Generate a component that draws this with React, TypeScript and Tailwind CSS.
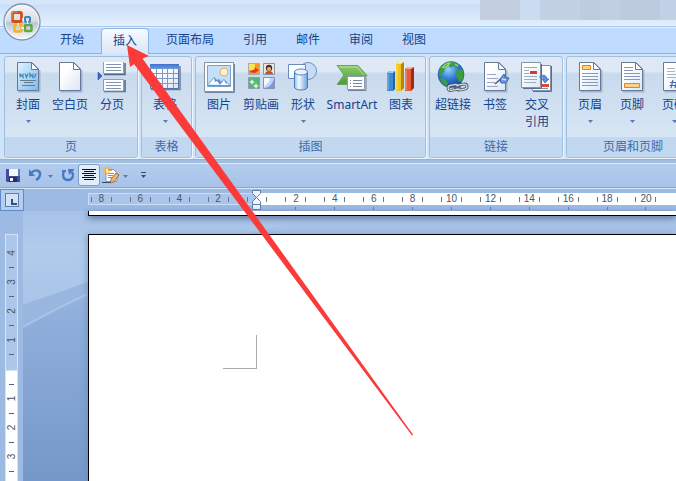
import type { ReactNode } from "react";

interface Tool {
  label: string;
  icon: ReactNode;
  arrow?: boolean;
  wide?: boolean;
}

const tabs = ["开始", "插入", "页面布局", "引用", "邮件", "审阅", "视图"];

function Defs() {
  return (
    <svg width="0" height="0" className="absolute">
      <defs>
        <linearGradient id="paper" x1="0" y1="0" x2="1" y2="1">
          <stop offset="0.3" stopColor="#fff" />
          <stop offset="1" stopColor="#dbe6f6" />
        </linearGradient>
        <linearGradient id="cover" x1="0" y1="0" x2="1" y2="1">
          <stop offset="0" stopColor="#e3f3ff" />
          <stop offset="1" stopColor="#79bdec" />
        </linearGradient>
        <linearGradient id="tube" x1="0" x2="1">
          <stop offset="0" stopColor="#9dc2ef" />
          <stop offset="0.35" stopColor="#f5faff" />
          <stop offset="1" stopColor="#6f9fdf" />
        </linearGradient>
        <linearGradient id="green" x1="0" y1="0" x2="0" y2="1">
          <stop offset="0" stopColor="#8ccb6c" />
          <stop offset="1" stopColor="#4c9a3c" />
        </linearGradient>
        <linearGradient id="header" x1="0" x2="0" y1="0" y2="1">
          <stop offset="0" stopColor="#3f73c9" />
          <stop offset="1" stopColor="#6b9ae4" />
        </linearGradient>
        <radialGradient id="globe" cx="0.4" cy="0.3" r="0.75">
          <stop offset="0" stopColor="#9cd1ff" />
          <stop offset="0.5" stopColor="#2e7bd6" />
          <stop offset="1" stopColor="#0c3f91" />
        </radialGradient>
        <linearGradient id="orb" x1="0" y1="0" x2="0" y2="1">
          <stop offset="0" stopColor="#f4f7fa" />
          <stop offset="0.48" stopColor="#d5dce6" />
          <stop offset="0.52" stopColor="#b9c5d5" />
          <stop offset="1" stopColor="#fbfdff" />
        </linearGradient>
      </defs>
    </svg>
  );
}

function Icon({ children }: { children: ReactNode }) {
  return (
    <svg width="32" height="32" viewBox="0 0 32 32" fill="none">
      {children}
    </svg>
  );
}

function Sheet({ fill = "url(#paper)" }: { fill?: string }) {
  return (
    <>
      <path d="M6.5 30.5h21V9" stroke="#8195b4" strokeOpacity="0.55" strokeWidth="2" />
      <path d="M5.5 1.5H20L26.500 8V29.500H5.500z" fill={fill} stroke="#66799b" />
      <path d="M19.500 1.500V8.500H26.500z" fill="#f8fbff" stroke="#66799b" />
    </>
  );
}

const coverIcon = (
  <Icon>
    <Sheet fill="url(#cover)" />
    <path d="M8 12.500v4M8 12.500l3 4v-4M13 12.500l1.500 4 1.500-4M18 16.500v-4l3 4v-4M24 12.500l-1.500 4" stroke="#4385b9" strokeWidth="1.200" />
    <path d="M8 19.500h16M12 21.500h9M10 24.500h13" stroke="#687b8d" />
  </Icon>
);

const blankIcon = (
  <Icon>
    <Sheet />
  </Icon>
);

const breakIcon = (
  <Icon>
    <path d="M8 13.500h21V2M8 30.500h21V19" stroke="#526783" strokeWidth="1.500" />
    <path d="M7.500 1V12.500H27.500V1M7.500 30V18.500H27.500V30z" fill="#fff" stroke="#8c9db7" />
    <path d="M10 3.500h15M10 6.500h15M10 9.500h15M10 21.500h15M10 24.500h15M10 27.500h15" stroke="#8193b3" />
    <path d="M2 11l4 4-4 4z" fill="#3b65c5" stroke="#2447a0" strokeWidth="0.500" />
  </Icon>
);

const tableIcon = (
  <Icon>
    <path d="M2 28.500h29V5" stroke="#6b7d9c" strokeWidth="1.500" />
    <path d="M1.500 3.500h28v24h-28z" fill="url(#paper)" stroke="#5272aa" />
    <path d="M1 3h29v5H1z" fill="url(#header)" />
    <path d="M7.500 8v19M13.500 8v19M18.500 8v19M24.500 8v19M2 12.500h27M2 17.500h27M2 22.500h27" stroke="#8398ba" />
  </Icon>
);

const pictureIcon = (
  <Icon>
    <path d="M2 31.500h29.500V3" stroke="#71849e" />
    <path d="M1.500 1.500h29v29h-29z" fill="#fbfdff" stroke="#8293a8" />
    <path d="M4.500 4.500h23v21h-23z" fill="#c3e0fa" stroke="#76a0cf" />
    <circle cx="21" cy="11" r="4" fill="#fff3d5" stroke="#eda65e" />
    <path d="M5 23l6-7 3 3 2-1 4 5z" fill="#688fca" />
    <path d="M14 24l7-6 6 6z" fill="#6e9ad6" />
    <path d="M6 23l5-6 1 4 2-1 3 4zM17 24l4-5 2 4 1-1 2 2z" fill="#fff" />
    <path d="M5 24h22v1H5z" fill="#6c91bd" />
  </Icon>
);

const clipIcon = (
  <Icon>
    <path d="M3.500 2.500h11v11h-11z" fill="#f79a25" stroke="#a6adb9" />
    <path d="M4 3h6v6H4z" fill="#ffe34d" />
    <path d="M4 11l6-3-1-2 5 3-4 3z" fill="#d93d21" />
    <path d="M18.500 2.500h11v11h-11z" fill="#eee8e1" stroke="#8795aa" />
    <circle cx="24" cy="7" r="3.200" fill="#4c312b" />
    <circle cx="24" cy="8" r="2" fill="#f6b36c" />
    <path d="M20 13c0-2 2-3 4-3s4 1 4 3z" fill="#d44a26" />
    <path d="M3.500 16.500h11v11h-11z" fill="#57b37b" stroke="#8a9db3" />
    <path d="M7 18l1 2 2 1-2 1-1 2-1-2-2-1 2-1zM11 22l1 2 2 1-2 1-1 2-1-2-2-1 2-1z" fill="#d7ffc3" />
    <path d="M18.500 16.500h11v11h-11z" fill="#bed3fb" stroke="#8793b5" />
    <path d="M19 17h6l-1 4-5 5z" fill="#f2f7ff" />
    <path d="M29 18v9h-9c5-1 7-4 9-9z" fill="#7897e6" />
  </Icon>
);

const shapesIcon = (
  <Icon>
    <circle cx="21" cy="10" r="8.500" fill="#c8dcf7" stroke="#6c8fc6" />
    <path d="M1.500 3.500h17v14h-17z" fill="url(#paper)" stroke="#688cc1" />
    <path d="M7.500 11v15c0 4 13 4 13 0V11z" fill="url(#tube)" stroke="#4779bf" />
    <ellipse cx="14" cy="11" rx="6.500" ry="3" fill="#e9f3ff" stroke="#5986c8" />
  </Icon>
);

const smartIcon = (
  <Icon>
    <path d="M1 4.500h21l9 10-8 9H1l7-9.500z" fill="url(#green)" stroke="#6ba756" />
    <path d="M3 6h18l7 8" stroke="#b4e196" />
    <path d="M12 29.500h18V17" stroke="#717e95" />
    <path d="M11.500 15.500h17v13h-17z" fill="#fff" stroke="#8b9bb2" />
    <path d="M14 19.500h1M17 19.500h9M14 22.500h1M17 22.500h9M14 25.500h1M17 25.500h9" stroke="#7987a0" />
  </Icon>
);

const chartIcon = (
  <Icon>
    <path d="M2 12l3-2h5v18l-2 2H2z" fill="#2263ae" />
    <path d="M2 12h6v18H2z" fill="#3e8bd2" />
    <path d="M2 12l3-2h5l-2 2z" fill="#91cdfa" />
    <path d="M11 3l3-2h5v26l-3 3h-5z" fill="#b58506" />
    <path d="M11 3h5v27h-5z" fill="#f1c51d" />
    <path d="M11 3l3-2h5l-3 2z" fill="#ffed8d" />
    <path d="M20 8l3-2h6v21l-3 3h-6z" fill="#a42b13" />
    <path d="M20 8h6v22h-6z" fill="#e75b35" />
    <path d="M20 8l3-2h6l-3 2z" fill="#ffb190" />
    <path d="M3 13v16M12 4v25M21 9v20" stroke="#fff" strokeOpacity="0.45" />
  </Icon>
);

const linkIcon = (
  <Icon>
    <circle cx="14" cy="13.500" r="13" fill="url(#globe)" stroke="#286091" strokeWidth="0.600" />
    <path d="M2 9c2-5 6-8 12-8l-3 4-3 2-1 4-4 4zM13 1c4 0 6 0 9 3l-3 2-3-1-2 2-2-2zM3 17l5 1 3 4-1 3c-4-1-7-5-7-8zM20 9l5-1c2 3 2 8 0 12l-3 1-2-4-2-4z" fill="#3d9c42" />
    <path d="M5 7c2-3 5-5 8-5l-3 3-4 2M18 3l3 2" stroke="#a4db69" strokeWidth="1.200" />
    <rect x="11" y="24" width="10" height="5" rx="2.500" stroke="#4e5967" strokeWidth="3" transform="rotate(-10 16 26)" />
    <rect x="20" y="23.500" width="10" height="5" rx="2.500" stroke="#4e5967" strokeWidth="3" transform="rotate(-10 25 26)" />
    <rect x="11" y="24" width="10" height="5" rx="2.500" stroke="#d5dde5" strokeWidth="1.300" transform="rotate(-10 16 26)" />
    <rect x="20" y="23.500" width="10" height="5" rx="2.500" stroke="#d5dde5" strokeWidth="1.300" transform="rotate(-10 25 26)" />
    <path d="M17 27l7-1.500" stroke="#59636f" strokeWidth="2" />
  </Icon>
);

const bookmarkIcon = (
  <Icon>
    <Sheet />
    <path d="M8 13.500h9M8 17.500h11M8 21.500h8M8 25.500h11" stroke="#9aa9c1" />
    <path d="M16 23l8-7" stroke="#42587a" strokeWidth="1.500" />
    <path d="M21 18l4-5 1 3 4 1-3 5h-5z" fill="#6c9ae0" stroke="#3763a7" />
    <path d="M23 18l4 1" stroke="#e4f1ff" />
  </Icon>
);

const crossIcon = (
  <Icon>
    <path d="M12 30.500h18.500V5" stroke="#58708f" />
    <path d="M11.500 4.500h18v25h-18z" fill="#fff" stroke="#8094af" />
    <path d="M20 23h8v3h-8z" fill="#d6502d" />
    <path d="M14 27.500h13" stroke="#899bb4" />
    <path d="M2 27.500h18.500V3" stroke="#58708f" />
    <path d="M.5 1.500h19v25H.5z" fill="url(#paper)" stroke="#8094af" />
    <path d="M3 6.500h13M3 9.500h5M3 12.500h5M3 15.500h13M3 18.500h13M3 21.500h12" stroke="#9aabc4" />
    <path d="M9 10h7v3H9z" fill="#d93b20" />
    <path d="M19 15c4-2 7 0 7 3h2l-4 4-3-4h2c0-2-2-2-4-1z" fill="#5e8fdb" stroke="#2f62b1" strokeWidth="0.700" />
  </Icon>
);

const headerIcon = (
  <Icon>
    <Sheet />
    <path d="M8.500 4.500h8v4h-8z" fill="#ffd28a" stroke="#e78118" />
    <path d="M8 12.500h16M8 15.500h16M8 18.500h16M8 21.500h16M8 24.500h16" stroke="#859ab9" />
  </Icon>
);

const footerIcon = (
  <Icon>
    <Sheet />
    <path d="M8 6.500h9M8 9.500h9M8 12.500h16M8 15.500h16M8 18.500h16" stroke="#859ab9" />
    <path d="M8.500 22.500h15v4h-15z" fill="#ffd28a" stroke="#e78118" />
  </Icon>
);

const numberIcon = (
  <Icon>
    <Sheet />
    <path d="M9 7.500h8M9 10.500h8M9 13.500h14M9 16.500h14" stroke="#a6b4ca" />
    <path d="M15 19l-2 8M19 19l-2 8M12 21.500h9M11.500 24.500h9" stroke="#466dac" strokeWidth="1.200" />
  </Icon>
);

const groups: { name: string; width: string; tools: Tool[] }[] = [
  {
    name: "页",
    width: "w-[134px]",
    tools: [
      { label: "封面", icon: coverIcon, arrow: true },
      { label: "空白页", icon: blankIcon },
      { label: "分页", icon: breakIcon },
    ],
  },
  {
    name: "表格",
    width: "w-[51px]",
    tools: [{ label: "表格", icon: tableIcon, arrow: true }],
  },
  {
    name: "插图",
    width: "w-[231px]",
    tools: [
      { label: "图片", icon: pictureIcon },
      { label: "剪贴画", icon: clipIcon },
      { label: "形状", icon: shapesIcon, arrow: true },
      { label: "SmartArt", icon: smartIcon, wide: true },
      { label: "图表", icon: chartIcon },
    ],
  },
  {
    name: "链接",
    width: "w-[134px]",
    tools: [
      { label: "超链接", icon: linkIcon },
      { label: "书签", icon: bookmarkIcon },
      { label: "交叉引用", icon: crossIcon },
    ],
  },
  {
    name: "页眉和页脚",
    width: "w-[134px]",
    tools: [
      { label: "页眉", icon: headerIcon, arrow: true },
      { label: "页脚", icon: footerIcon, arrow: true },
      { label: "页码", icon: numberIcon, arrow: true },
    ],
  },
];

function Caret({ bar = false }: { bar?: boolean }) {
  return (
    <svg width="7" height="7" viewBox="0 0 7 7" className="shrink-0">
      {bar && <path d="M1 0h5v1H1z" fill="#2c4f86" />}
      <path d="M1 3h5L3.500 6z" fill={bar ? "#2c4f86" : "#567db1"} />
    </svg>
  );
}

function ToolButton({ tool }: { tool: Tool }) {
  return (
    <button
      className={`flex h-20 shrink-0 flex-col items-center pt-1 text-[#15428b] ${tool.wide ? "w-14" : "w-[42px]"}`}
    >
      {tool.icon}
      <span
        className={`mt-[3px] text-xs leading-[17px] ${tool.label.length === 4 ? "w-6 whitespace-normal" : "whitespace-nowrap"}`}
      >
        {tool.label}
      </span>
      {tool.arrow && (
        <span className="mt-1">
          <Caret />
        </span>
      )}
    </button>
  );
}

function OfficeButton() {
  return (
    <svg width="38" height="38" viewBox="0 0 38 38" className="absolute left-[3px] top-[3px]" fill="none">
      <circle cx="19" cy="19" r="18" fill="url(#orb)" stroke="#8193ae" strokeWidth="1.300" />
      <circle cx="19" cy="19" r="16.700" stroke="#fff" strokeOpacity="0.800" />
      <rect x="9.500" y="9.500" width="9" height="9" rx="1.500" stroke="#d84b16" strokeWidth="2.800" />
      <path d="M9 17V9h6" stroke="#f28b38" strokeWidth="1.200" />
      <rect x="22" y="14" width="5" height="5" rx="1" stroke="#3c86c8" strokeWidth="2" />
      <rect x="11.500" y="22" width="7" height="6.500" rx="1" stroke="#f3b329" strokeWidth="2.500" />
      <rect x="22" y="22" width="6.500" height="6" rx="1" stroke="#62a83c" strokeWidth="2.500" />
      <path d="M20 15v3M24.500 18v3M15 20v3M18 25h3" stroke="#f7faff" strokeWidth="1.300" />
    </svg>
  );
}

function TitleBar() {
  return (
    <header className="flex h-[26px] justify-end bg-linear-to-b from-[#d7e7fb] from-15% via-[#cbdff7] via-20% to-[#e2f0fe]">
      {/* blurred window caption */}
      <div className="flex h-5 w-[196px]">
        <div className="w-10 bg-[#c3cfdf]" />
        <div className="w-5 bg-[#cbdcf3]" />
        <div className="w-10 bg-[#c3d1e5]" />
        <div className="w-5 bg-[#bfccdd]" />
        <div className="w-5 bg-[#c0cfe1]" />
        <div className="w-10 bg-[#bccbde]" />
        <div className="grow bg-[#c2d1e6]" />
      </div>
    </header>
  );
}

function TabBar() {
  return (
    <nav className="flex h-[28px] items-start border-t border-b border-t-[#a8c8ea] border-b-[#8db2e3] bg-[#bfdbff] pl-[48px] text-xs text-[#15428b] shadow-[inset_0_1px_#e3f1ff]">
      {tabs.map((tab) => (
        <a
          key={tab}
          className={
            tab === "插入"
              ? "mx-[2.500px] mt-px flex h-[26px] items-center rounded-t border border-b-0 border-[#8fb4e0] bg-linear-to-b from-[#f5faff] to-[#dbe7f5] px-[11px] pb-0.5"
              : "flex h-[26px] items-center px-[14.500px] first:pl-3"
          }
        >
          {tab}
        </a>
      ))}
    </nav>
  );
}

function Ribbon() {
  return (
    <section className="flex h-[106px] gap-[3px] overflow-hidden border-b border-[#8eb4df] bg-[#cfe3fa] pt-[2px] pl-1">
      {groups.map((group) => (
        <div
          key={group.name}
          className={`flex h-[102px] shrink-0 flex-col overflow-hidden rounded-[3px] border border-[#9fbfdd] bg-linear-to-b from-[#dfe9f5] from-14% via-[#c9daed] via-17% to-[#dce9f7] shadow-[1px_1px_0_#edf6ff] ${group.width}`}
        >
          <div className="flex h-20 shrink-0 pl-[2px]">
            {group.tools.map((tool) => (
              <ToolButton key={tool.label} tool={tool} />
            ))}
          </div>
          <div className="flex h-5 items-center justify-center bg-[#c1d8f0] text-xs text-[#3e6aaa]">
            {group.name}
          </div>
        </div>
      ))}
    </section>
  );
}

function QuickAccess() {
  return (
    <div className="flex h-[28px] items-center border-t-[3px] border-b border-t-[#a3bfdf] border-b-[#83a9d6] bg-linear-to-b from-[#b4cdee] to-[#a7c3e8] pl-1.5 shadow-[inset_0_1px_#dceaff]">
      <svg width="14" height="14" viewBox="0 0 14 14">
        <path d="M0 1h13l1 1v12H1l-1-1z" fill="#414d9d" />
        <path d="M3 1h9v7H3z" fill="#f1f6ff" />
        <path d="M12 1h2v7h-2z" fill="#687bce" />
        <path d="M3 9h8v5H3z" fill="#252e64" />
        <path d="M4 10h3v3H4z" fill="#fff" />
      </svg>
      <svg width="15" height="16" viewBox="0 0 15 16" className="ml-2" fill="none">
        <path d="M3 6c5-5 10-2 9 2-.5 3-2 4-4 5" stroke="#4479c6" strokeWidth="2.300" />
        <path d="M1 2v7h6z" fill="#4479c6" />
      </svg>
      <span className="ml-1"><Caret /></span>
      <svg width="14" height="16" viewBox="0 0 14 16" className="ml-[7px]" fill="none">
        <path d="M3 4c-2 4-1 9 4 9 5 0 6-5 4-8" stroke="#4479c6" strokeWidth="2.300" />
        <path d="M7 2h6v1L8 8z" fill="#4479c6" />
        <path d="M1 3h4v2H1z" fill="#4479c6" />
      </svg>
      <span className="ml-[3px] flex h-[22px] w-[22px] items-center justify-center rounded-[3px] border border-[#7f9cc7] bg-[#e2edfb]">
        <svg width="16" height="14" viewBox="0 0 16 14" stroke="#111">
          <path d="M1 1.500h14M3 3.500h10M1 5.500h14M3 7.500h10M1 9.500h14M3 11.500h10" />
        </svg>
      </span>
      <svg width="18" height="18" viewBox="0 0 18 18" className="ml-0.5" fill="none">
        <path d="M4 3.500h8l3 4v8H4z" fill="#fff" stroke="#8b98ac" />
        <path d="M6 7.500h6M6 9.500h5M6 11.500h6" stroke="#8494ad" />
        <path d="M5 0v9M1 4.500h9M2 1.500l6 6M8 1.500l-6 6" stroke="#f5ae20" />
        <path d="M4 3h2v3H4z" fill="#fff593" />
        <path d="M9 13l5-6 3 2-5 7-4 1z" fill="#efb16b" stroke="#80552e" strokeWidth="0.700" />
        <path d="M0 16.500h8" stroke="#31486e" />
      </svg>
      <span className="ml-0.5"><Caret /></span>
      <span className="ml-[11px]"><Caret bar /></span>
    </div>
  );
}

function RulerCell({ value }: { value: number }) {
  return (
    <div className="flex w-[38.900px] shrink-0 items-center justify-center gap-1">
      <i className="h-[5px] w-px bg-[#6b7685]" />
      <span className="w-[11px] text-center">{value}</span>
      <i className="h-[5px] w-px bg-[#6b7685]" />
    </div>
  );
}

function HorizontalRuler() {
  return (
    <div className="relative flex h-[23px] border-t border-[#d5e5fa] bg-[#9dbae3]">
      <div className="flex h-[22px] w-6 items-center justify-center border border-[#5f88c9] bg-[#b5ceef]">
        <div className="flex h-[14px] w-[14px] items-center justify-center border border-[#5c7eae] bg-[#d2e1f5]">
          <i className="mt-1 ml-1 h-[6px] w-[6px] border-b-2 border-l-2 border-[#35527f]" />
        </div>
      </div>
      <div className="ml-16 flex flex-col pt-1 font-['Liberation_Sans',sans-serif] text-[10px] leading-none text-[#4b5563]">
        <div className="flex h-3 w-[588px]">
          <div className="flex w-[169px] shrink-0 justify-end overflow-hidden border-y border-l border-[#cadefa] bg-[#aac5e9]">
            {[8, 6, 4, 2].map((n) => (
              <RulerCell key={n} value={n} />
            ))}
            <div className="flex w-[19.500px] shrink-0 items-center justify-center">
              <i className="h-[5px] w-px bg-[#6b7685]" />
            </div>
          </div>
          <div className="flex grow overflow-hidden bg-white">
            <div className="flex w-[19.500px] shrink-0 items-center justify-center">
              <i className="h-[5px] w-px bg-[#6b7685]" />
            </div>
            {[2, 4, 6, 8, 10, 12, 14, 16, 18, 20].map((n) => (
              <RulerCell key={n} value={n} />
            ))}
          </div>
        </div>
        <div className="flex w-[588px] overflow-hidden pt-0.5 pl-[188.500px]">
          {[2, 4, 6, 8, 10, 12, 14, 16, 18, 20].map((n) => (
            <div key={n} className="flex w-[38.900px] shrink-0 justify-center">
              <i className="h-[3px] w-px bg-[#6884a9]" />
            </div>
          ))}
        </div>
      </div>
      <svg width="11" height="21" viewBox="0 0 11 21" className="absolute left-[251px] top-[1px]" fill="#edf4fd" stroke="#5d7fa9">
        <path d="M1.500.5h8v3L5.500 7.500l4 4v3h-8v-3l4-4-4-4zM1.500 14.500h8v5h-8z" />
      </svg>
    </div>
  );
}

function VerticalRuler() {
  return (
    <aside className="flex w-[23px] shrink-0 flex-col bg-[#9dbae3] pt-[23px] pl-[5px] font-['Liberation_Sans',sans-serif] text-[10px] leading-none text-[#4b5563]">
      <div className="flex h-[137px] w-[13px] shrink-0 flex-col items-center border border-[#d2e4fb] bg-[#acc7ea] pt-1">
        {[4, 3, 2, 1].map((n) => (
          <div key={n} className="flex h-[29.100px] w-full flex-col items-center">
            <span className="flex h-[29px] items-center -rotate-90">{n}</span>
            <i className="h-px w-[5px] shrink-0 bg-[#53657f]" />
          </div>
        ))}
      </div>
      <div className="flex h-[111px] w-[13px] shrink-0 flex-col items-center border-x border-[#d2e4fb] bg-white pt-[13px]">
        {[1, 2, 3].map((n) => (
          <div key={n} className="flex h-[29.100px] w-full shrink-0 flex-col items-center">
            <i className="h-px w-[5px] shrink-0 bg-[#53657f]" />
            <span className="flex h-[27px] items-center -rotate-90">{n}</span>
          </div>
        ))}
        <i className="h-px w-[5px] shrink-0 bg-[#53657f]" />
      </div>
    </aside>
  );
}

function Workspace() {
  return (
    <main className="flex h-[270px]">
      <VerticalRuler />
      <div className="relative flex grow flex-col bg-linear-to-b from-[#aac6e9] via-[#8faedb] via-40% to-[#7598ca]">
        {/* backdrop swoosh */}
        <svg width="653" height="270" viewBox="0 0 653 270" className="absolute top-0 left-0">
          <defs>
            <linearGradient id="sky" x1="0" y1="0" x2="0" y2="1">
              <stop offset="0" stopColor="#a6c2e7" />
              <stop offset="0.400" stopColor="#b1cbec" />
              <stop offset="1" stopColor="#a8c4e8" />
            </linearGradient>
          </defs>
          <path d="M0 0h300C220 30 150 35 65 71C40 80 20 88 0 94z" fill="url(#sky)" />
          <path d="M0 94C20 87 40 80 65 71V83C40 94 20 106 0 116z" fill="#98b6de" />
          <path d="M0 116C20 105 40 94 65 83" fill="none" stroke="#a7c3e8" strokeWidth="2" />
        </svg>
        <div className="relative ml-[65px] h-[5px] shrink-0 border-b border-l border-black bg-white shadow-[0_2px_6px_#4d658a]" />
        <div className="relative mt-[18px] ml-[65px] grow border-t border-l border-black bg-white pt-[100px] pl-[134px] shadow-[-2px_0_5px_#6685b380]">
          <div className="h-[34px] w-[34px] border-r border-b border-[#aaa]" />
        </div>
      </div>
    </main>
  );
}

export default function App() {
  return (
    <div className="relative h-[481px] w-[676px] overflow-hidden bg-[#9dbae3] font-['Noto_Sans','Noto_Sans_CJK_SC',sans-serif]">
      <Defs />
      <TitleBar />
      <TabBar />
      <Ribbon />
      <QuickAccess />
      <HorizontalRuler />
      <Workspace />
      <OfficeButton />
      <svg width="676" height="481" viewBox="0 0 676 481" className="pointer-events-none absolute inset-0">
        <path d="M127 45L149 56L142.500 58.500L413 434.500L412 435.500L134 64L130 67z" fill="#fb3a3a" />
      </svg>
    </div>
  );
}
